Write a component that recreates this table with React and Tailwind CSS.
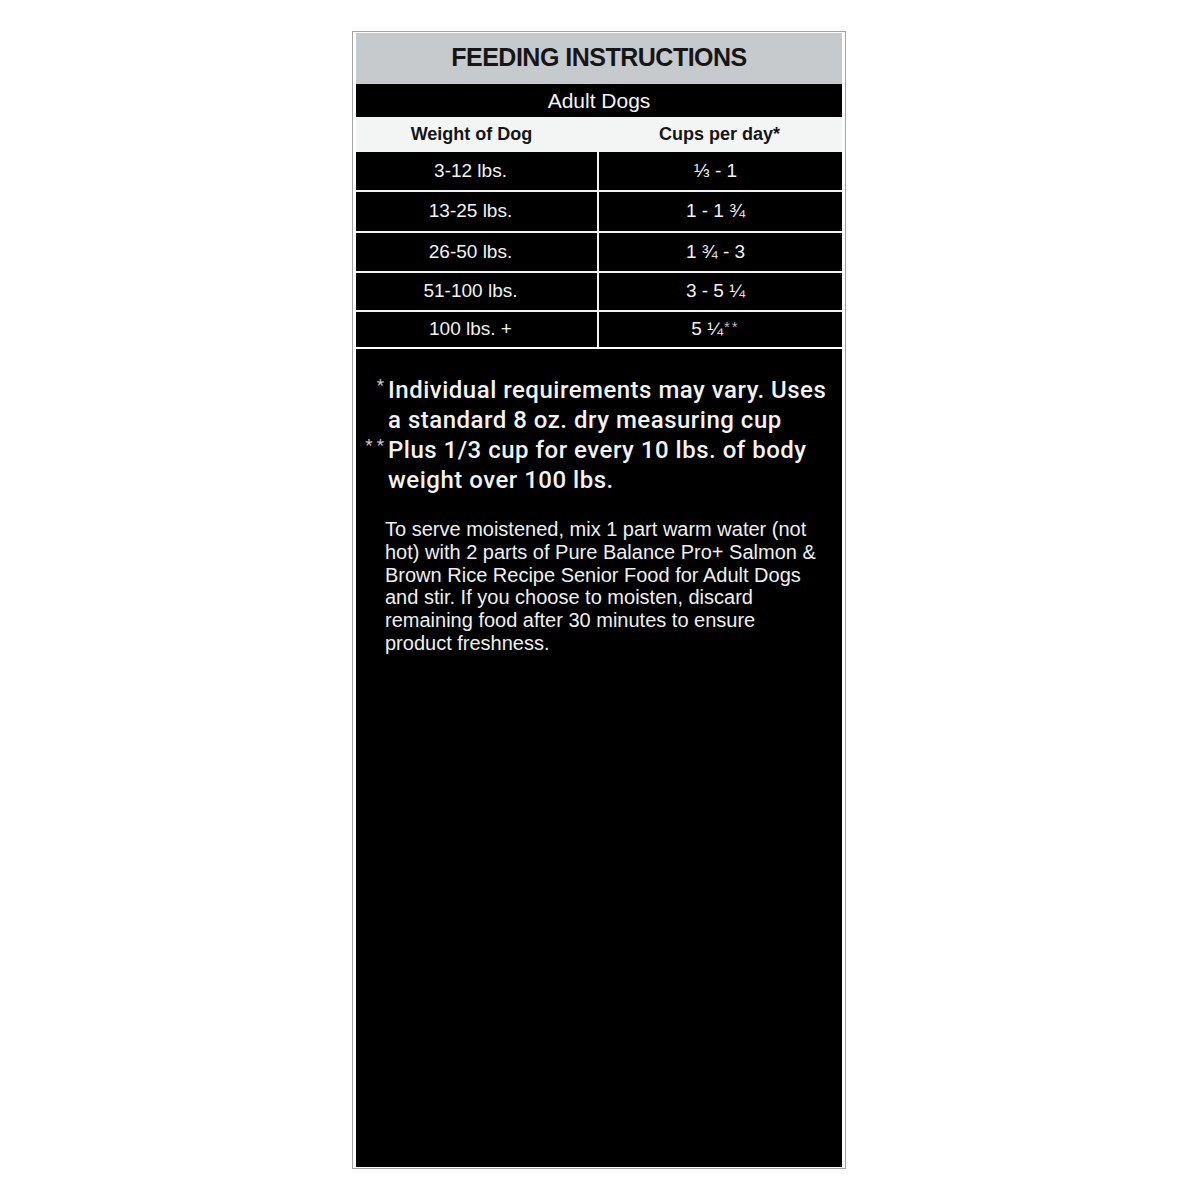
import React from "react";

const rows = [
  { weight: "3-12 lbs.", cups: "⅓ - 1", h: "h-[38px]" },
  { weight: "13-25 lbs.", cups: "1 - 1 ¾", h: "h-[39px]" },
  { weight: "26-50 lbs.", cups: "1 ¾ - 3", h: "h-[38px]" },
  { weight: "51-100 lbs.", cups: "3 - 5 ¼", h: "h-[37px]" },
  { weight: "100 lbs. +", cups: "5 ¼", stars: true, h: "h-[35px]" },
];

function Star({ children }) {
  return (
    <span className="text-[17px] leading-none tracking-[4px] text-[#c4c4c4] align-top relative top-[2px] font-normal">
      {children}
    </span>
  );
}

export default function App() {
  return (
    <div
      className="w-[1200px] h-[1200px] bg-white pt-[31px]"
      style={{ fontFamily: '"Liberation Sans", Arial, sans-serif' }}
    >
      <div className="ml-[352px] w-[494px] h-[1138px] border border-[#a3a3a3] px-[3px] py-[1px] flex flex-col">
        {/* title */}
        <div className="h-[51px] bg-[#c7cacd] flex items-center justify-center">
          <h1 className="text-[25px] font-bold tracking-[-0.5px] text-[#161616] pb-[2px]">
            FEEDING INSTRUCTIONS
          </h1>
        </div>

        <div className="h-[33px] bg-black flex items-center justify-center">
          <span className="text-[21px] text-[#f4f4f4]">Adult Dogs</span>
        </div>

        <div className="h-[35px] bg-[#f3f5f5] grid grid-cols-[241px_1fr] items-center text-[18px] font-bold text-[#151515]">
          <div className="text-center pr-[10px]">Weight of Dog</div>
          <div className="text-center">Cups per day*</div>
        </div>

        {/* table rows */}
        <div className="flex flex-col gap-y-[2px] bg-[#f3f3f3]">
          {rows.map((r) => (
            <div key={r.weight} className={`grid grid-cols-[241px_1fr] gap-x-[2px] ${r.h}`}>
              <div className="bg-black flex items-center justify-center text-[19px] text-[#f2f2f2] pr-[12px]">
                {r.weight}
              </div>
              <div className="bg-black flex items-center justify-center text-[19px] text-[#f2f2f2] pr-[10px]">
                <span>
                  {r.cups}
                  {r.stars && (
                    <span className="text-[15px] tracking-[2px] text-[#bdbdbd] align-top relative top-[1px] ml-[1px]">
                      **
                    </span>
                  )}
                </span>
              </div>
            </div>
          ))}
        </div>

        {/* notes */}
        <div className="flex-1 bg-black mt-[2px] pt-[26px] text-[#f2f2f2]">
          <div
            className="text-[24px] leading-[30px] font-medium tracking-[0.5px]"
            style={{ fontFamily: 'Roboto, "Liberation Sans", sans-serif' }}
          >
            <div className="flex">
              <div className="w-[32px] text-right shrink-0">
                <Star>*</Star>
              </div>
              <div>
                Individual requirements may vary. Uses
                <br />a standard 8 oz. dry measuring cup
              </div>
            </div>
            <div className="flex">
              <div className="w-[32px] text-right shrink-0">
                <Star>**</Star>
              </div>
              <div>
                Plus 1/3 cup for every 10 lbs. of body
                <br />
                weight over 100 lbs.
              </div>
            </div>
          </div>

          <p className="mt-[23px] pl-[29px] text-[20px] leading-[22.8px] text-[#efefef]">
            To serve moistened, mix 1 part warm water (not
            <br />
            hot) with 2 parts of Pure Balance Pro+ Salmon &amp;
            <br />
            Brown Rice Recipe Senior Food for Adult Dogs
            <br />
            and stir. If you choose to moisten, discard
            <br />
            remaining food after 30 minutes to ensure
            <br />
            product freshness.
          </p>
        </div>
      </div>
    </div>
  );
}
